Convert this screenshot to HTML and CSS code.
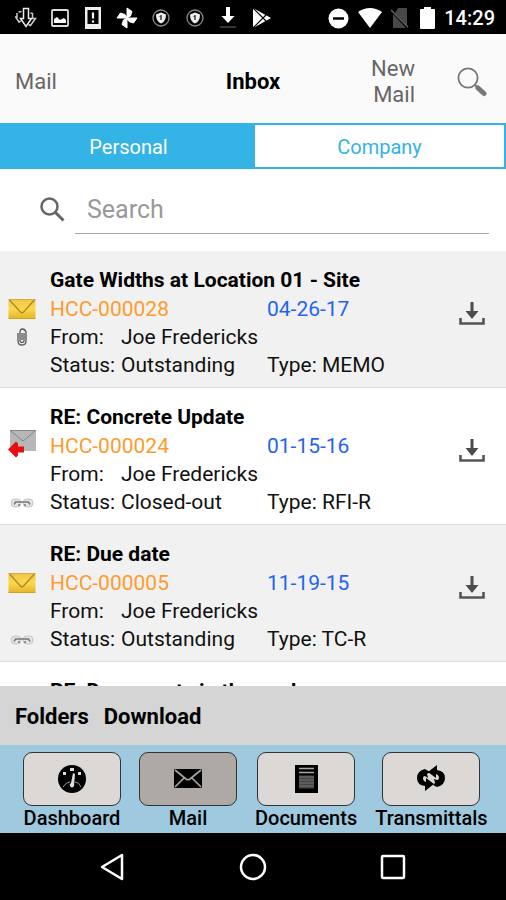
FILE: index.html
```html
<!DOCTYPE html>
<html lang="en">
<head>
<meta charset="utf-8">
<meta name="viewport" content="width=device-width, initial-scale=1">
<title>Inbox</title>
<link rel="stylesheet" href="styles.css">
</head>
<body>
<svg class="defs" width="0" height="0" aria-hidden="true">
  <defs>
    <linearGradient id="gold" x1="0" y1="0" x2="0" y2="1">
      <stop offset="0" stop-color="#efc648"/><stop offset=".5" stop-color="#fbd84a"/><stop offset="1" stop-color="#e3b32a"/>
    </linearGradient>
    <symbol id="envelope" viewBox="0 0 27 20">
      <rect width="27" height="20" rx="1" fill="url(#gold)"/>
      <path d="M1 1l11 12q1.500 1.500 3 0L26 1" fill="none" stroke="#a98636" stroke-width="1.300"/>
      <path d="M0 .5h27" stroke="#d2ac47"/>
      <path d="M0 19.500h27" stroke="#d3a21f"/>
    </symbol>
    <symbol id="replied" viewBox="0 0 28 32">
      <rect x="2" width="26" height="21" fill="#b7b7b7"/>
      <path d="M2 .5h26M3 1l10.500 9q1.500 1.500 3 0L27 1" fill="none" stroke="#858585"/>
      <path d="M0 19.500l8-8 2 2v3h6v6h-6v3l-2 2z" fill="#e90d0d"/>
    </symbol>
    <symbol id="clip" viewBox="0 0 10 18">
      <path d="M7 5v8q0 1.500-2 1.500T3 13V4q0-3 2.500-3T9 4v9q0 4-4 4t-4-4V5M5 5v7" fill="none" stroke="#555" stroke-width="1.300"/>
    </symbol>
    <symbol id="link" viewBox="0 0 24 12">
      <rect x="1" y="2" width="10" height="8" rx="4" fill="#e5e5e5" stroke="#c4c4c4"/>
      <rect x="13" y="2" width="10" height="8" rx="4" fill="#e5e5e5" stroke="#c4c4c4"/>
      <path d="M4 7.500L5.500 5h13L20 7.500M8 8h2M14 8h2" fill="none" stroke="#777" stroke-width="1.500"/>
    </symbol>
    <symbol id="download" viewBox="0 0 26 24">
      <path d="M1.500 16v5.500h23V16" fill="none" stroke="#555" stroke-width="2.600"/>
      <path d="M11.500 0h3v9H19.500l-6.500 8-6.500-8h5z" fill="#4c4c4c"/>
    </symbol>
    <symbol id="shield" viewBox="0 0 22 22">
      <circle cx="11" cy="11" r="8" fill="none" stroke="#8b8b8b" stroke-width="1.300"/>
      <path d="M11 5.500l5 2q0 7-5 9-5-2-5-9z" fill="#eee"/>
      <path d="M11 8v5M9.500 9.500L11 8.500" stroke="#333" stroke-width="1.400"/>
    </symbol>
  </defs>
</svg>

<div class="status">
  <div class="notices">
    <svg viewBox="0 0 22 22" width="22" height="22"><path d="M8.500 1.500h5v10h3L11 19.500 5.500 11.500h3z" fill="#000" stroke="#eee" stroke-width="1.500"/><path d="M3.500 5l3-.5M2 6v4H.5l3.500 5 2-1M15.500 6l2 .5v5h3l-5 7-2-1" fill="none" stroke="#ccc" stroke-width="1.500"/></svg>
    <svg viewBox="0 0 22 22" width="22" height="22"><rect x="3" y="3" width="16" height="16" rx="1" fill="none" stroke="#ddd" stroke-width="1.800"/><path d="M5 16v-4l3-2 3 3 4-2 2 2v3z" fill="#fff"/></svg>
    <svg viewBox="0 0 22 22" width="22" height="22"><path d="M3 0h16v22H3zM5.500 3v14h11V3z" fill="#eee" fill-rule="evenodd"/><path d="M11 5.500v6M11 13.500v2" stroke="#fff" stroke-width="2.200"/></svg>
    <svg viewBox="0 0 22 22" width="22" height="22"><path d="M11 11V1l5 3.500L14.500 9zM11 11h10l-3.500 5-4.500-1.500zM11 11v10l-5-3.500L7.500 13zM11 11H1l3.500-5L9 7.500z" fill="#fff" stroke="#fff"/></svg>
    <svg width="22" height="22"><use href="#shield"/></svg>
    <svg width="22" height="22"><use href="#shield"/></svg>
    <svg viewBox="0 0 22 22" width="22" height="22"><path d="M9 0h4v9h4.500L11 16 4.500 9H9z" fill="#fff"/><path d="M3 20h16" stroke="#333" stroke-width="2"/></svg>
    <svg viewBox="0 0 22 22" width="22" height="22"><path d="M2 1l18 10L2 21z" fill="#fff"/><path d="M2 1l13 13M2 21L15 8" stroke="#000" stroke-width="1.200"/></svg>
  </div>
  <div class="system">
    <svg viewBox="0 0 21 21" width="21" height="21"><circle cx="10.500" cy="10.500" r="10" fill="#fff"/><path d="M5 10.500h11" stroke="#000" stroke-width="2.500"/></svg>
    <svg viewBox="0 0 24 20" width="24" height="20"><path d="M0 4Q12-4 24 4L12 20z" fill="#fff"/></svg>
    <svg viewBox="0 0 20 20" width="20" height="20"><path d="M7 0h9v17L4 5zM2 6l13 14H2z" fill="#484848"/><path d="M0 2l17 17" stroke="#666" stroke-width="1.500"/></svg>
    <svg viewBox="0 0 15 22" width="15" height="22"><path d="M4 0h7v2h3q1 0 1 1v18q0 1-1 1H1q-1 0-1-1V3q0-1 1-1h3z" fill="#fff"/></svg>
    <time>14:29</time>
  </div>
</div>

<header class="header">
  <a class="back" href="#">Mail</a>
  <h1>Inbox</h1>
  <div class="actions">
    <a class="new-mail" href="#">New<br>Mail</a>
    <button class="icon-button" aria-label="Search mail">
      <svg viewBox="0 0 30 30" width="30" height="30"><circle cx="11" cy="11" r="9.600" fill="none" stroke="#777" stroke-width="1.800"/><path d="M18 18l3 3" stroke="#777" stroke-width="2"/><path d="M21 21l6 5.500" stroke="#777" stroke-width="5" stroke-linecap="round"/></svg>
    </button>
  </div>
</header>

<div class="segments">
  <button class="segment selected">Personal</button>
  <button class="segment">Company</button>
</div>

<label class="search">
  <svg viewBox="0 0 25 25" width="25" height="25" aria-hidden="true"><circle cx="9.500" cy="9.500" r="8" fill="none" stroke="#666" stroke-width="2.500"/><path d="M15 15l8.500 8.500" stroke="#666" stroke-width="3"/></svg>
  <input type="search" placeholder="Search">
</label>

<main class="list">
  <article class="item">
    <h2>Gate Widths at Location 01 - Site</h2>
    <svg class="kind" width="28" height="20"><use href="#envelope"/></svg>
    <span class="code">HCC-000028</span><span class="date">04-26-17</span>
    <svg class="clip" width="10" height="18"><use href="#clip"/></svg>
    <span class="from">From:</span><span class="sender">Joe Fredericks</span>
    <span class="state">Status:</span><span class="state-value">Outstanding</span><span class="type">Type: MEMO</span>
    <button class="download" aria-label="Download"><svg width="26" height="24"><use href="#download"/></svg></button>
  </article>
  <article class="item">
    <h2>RE: Concrete Update</h2>
    <svg class="kind" width="28" height="32"><use href="#replied"/></svg>
    <span class="code">HCC-000024</span><span class="date">01-15-16</span>
    <span class="from">From:</span><span class="sender">Joe Fredericks</span>
    <svg class="link" width="24" height="12"><use href="#link"/></svg>
    <span class="state">Status:</span><span class="state-value">Closed-out</span><span class="type">Type: RFI-R</span>
    <button class="download" aria-label="Download"><svg width="26" height="24"><use href="#download"/></svg></button>
  </article>
  <article class="item">
    <h2>RE: Due date</h2>
    <svg class="kind" width="28" height="20"><use href="#envelope"/></svg>
    <span class="code">HCC-000005</span><span class="date">11-19-15</span>
    <span class="from">From:</span><span class="sender">Joe Fredericks</span>
    <svg class="link" width="24" height="12"><use href="#link"/></svg>
    <span class="state">Status:</span><span class="state-value">Outstanding</span><span class="type">Type: TC-R</span>
    <button class="download" aria-label="Download"><svg width="26" height="24"><use href="#download"/></svg></button>
  </article>
  <article class="item">
    <h2>RE: Documents in the package</h2>
  </article>
</main>

<div class="toolbar">
  <button>Folders</button>
  <button>Download</button>
</div>

<nav class="tabs">
  <a class="tab" href="#">
    <span class="tile"><svg viewBox="0 0 28 28" width="28" height="28"><circle cx="14" cy="14" r="14"/><path d="M5 22q3-5 7-5M17 17q4 0 6 5" fill="none" stroke="#999"/><path d="M12 3h4v3h-4zM5 7h3v3H5zM20 7h3v3h-3z" fill="#ddd"/><path d="M15 8l2 1-1 12q-2 3-4 0-1-2 1-3z" fill="#ddd"/></svg></span>
    Dashboard
  </a>
  <a class="tab" href="#" aria-current="page">
    <span class="tile"><svg viewBox="0 0 28 28" width="28" height="28"><rect y="4" width="28" height="19" rx="1"/><path d="M1 5l11 9q2 1.500 4 0L27 5M1 22l9-9M27 22l-9-9" fill="none" stroke="#aaa39f" stroke-width="1.700"/></svg></span>
    Mail
  </a>
  <a class="tab" href="#">
    <span class="tile"><svg viewBox="0 0 28 28" width="28" height="28"><rect x="3" width="23" height="28"/><path d="M7 3.500h15M7 7.500h15" stroke="#aaa" stroke-width="1.300"/><path d="M7 10.500h15v13H7z" fill="#444"/><path d="M7 12h15M7 15h15M7 18h15M7 21h15" stroke="#777"/></svg></span>
    Documents
  </a>
  <a class="tab" href="#">
    <span class="tile"><svg viewBox="0 0 28 28" width="28" height="28"><path d="M8 4Q0 6 0 13q0 7 8 8v5l9-7-8-6v4q-3-1-3-4 0-2 2-2l3 2-1-4 3-2z"/><path d="M20 22q8-2 8-9 0-7-8-8V0l-9 7 8 6V9q3 1 3 4 0 2-2 2l-3-1 1 4-2 2z"/></svg></span>
    Transmittals
  </a>
  <a class="tab" href="#" aria-label="More"><span class="tile"></span></a>
</nav>

<div class="system-nav">
  <button aria-label="Back"><svg viewBox="0 0 28 28" width="28" height="28"><path d="M3 14l20-12v24z" fill="none" stroke="#fff" stroke-width="2.500" stroke-linejoin="round"/></svg></button>
  <button aria-label="Home"><svg viewBox="0 0 28 28" width="28" height="28"><circle cx="14" cy="14" r="12" fill="none" stroke="#fff" stroke-width="2.500"/></svg></button>
  <button aria-label="Recent apps"><svg viewBox="0 0 28 28" width="28" height="28"><rect x="3" y="3" width="22" height="22" rx="1" fill="none" stroke="#fff" stroke-width="2.500"/></svg></button>
</div>
</body>
</html>
```

FILE: styles.css
```css
* { box-sizing: border-box; }

body {
  margin: 0;
  height: 100vh;
  display: flex;
  flex-direction: column;
  overflow: hidden;
  background: #fff;
  color: #111;
  font: 400 21px/28px Roboto, "Liberation Sans", sans-serif;
}

.defs { position: absolute; }
svg { display: block; flex: none; }
h1, h2 { margin: 0; font-weight: 700; }
a { color: inherit; text-decoration: none; }
button {
  padding: 0;
  border: 0;
  background: none;
  color: inherit;
  font: inherit;
}

.status {
  display: flex;
  justify-content: space-between;
  align-items: center;
  padding: 5px 11px 3px 15px;
  background: #000;
  color: #fff;
  font-size: 20px;
  font-weight: 500;
  line-height: 26px;
}
.notices { display: flex; justify-content: space-between; flex: 0 1 258px; }
.system { display: flex; align-items: center; gap: 9px; }

.header {
  display: grid;
  grid-template-columns: 1fr auto 1fr;
  align-items: center;
  padding: 22px 15px 15px;
  background: #fafafa;
  color: #666;
  font-size: 22px;
  line-height: 26px;
}
.header h1 { color: #000; font-size: 22px; }
.actions { display: flex; justify-content: flex-end; align-items: center; gap: 38px; text-align: right; }
.icon-button { padding: 0 4px; }

.segments {
  display: grid;
  grid-template-columns: 1fr 1fr;
  border: 2px solid #33b3e6;
  background: #fff;
}
.segment { padding: 8px 0 6px; border-left: 2px solid #33b3e6; color: #33b3e6; font-size: 20px; }
.segment.selected { background: #33b3e6; color: #fff; }

.search { display: flex; align-items: center; gap: 10px; padding: 15px 17px 17px 40px; }
.search input {
  flex: 1;
  min-width: 0;
  height: 50px;
  padding: 2px 12px 0;
  border: 0;
  border-bottom: 1px solid #aaa;
  background: none;
  color: #333;
  font: inherit;
  font-size: 25px;
}
.search input::placeholder { color: #999; }

.list { flex: 1; min-height: 0; overflow: hidden; }
.item {
  display: grid;
  grid-template-columns: 34px 71px 146px 1fr 26px;
  grid-template-rows: 29px 28px 28px 29px;
  padding: 15px 21px 7px 16px;
  border-bottom: 1px solid #ddd;
  white-space: nowrap;
}
.item:nth-child(odd) { background: #f1f1f1; }
.item h2 { grid-area: 1 / 2 / 2 / 5; color: #000; font-size: 21px; line-height: 29px; }
.kind, .clip, .link { grid-column: 1; align-self: center; justify-self: center; margin-left: -22px; }
.kind { grid-row: 2; }
.clip { grid-row: 3; }
.link { grid-row: 4; }
.code { grid-area: 2 / 2 / 3 / 4; color: #ff9b2e; }
.date { grid-area: 2 / 4; color: #2463f0; }
.from { grid-area: 3 / 2; }
.sender { grid-area: 3 / 3; }
.state { grid-area: 4 / 2; }
.state-value { grid-area: 4 / 3; }
.type { grid-area: 4 / 4; }
.state, .state-value, .type { line-height: 29px; }
.download { grid-area: 2 / 5 / 4 / 6; align-self: start; margin-top: 7px; }

.toolbar {
  display: flex;
  gap: 15px;
  padding: 17px 15px 14px;
  background: #d5d5d5;
  color: #000;
  font-size: 22px;
  font-weight: 700;
}

.tabs {
  display: flex;
  gap: 18px;
  padding: 7px 23px 2px;
  overflow: hidden;
  background: #9ec9df;
  color: #000;
  font-size: 20px;
  font-weight: 500;
  line-height: 25px;
}
.tab { display: flex; flex: none; flex-direction: column; align-items: center; min-width: 98px; }
.tile {
  display: flex;
  align-items: center;
  justify-content: center;
  width: 98px;
  height: 54px;
  border: 1px solid #333;
  border-radius: 9px;
  background: #dcd8d5;
}
.tab[aria-current] .tile { background: #afa9a5; }

.system-nav {
  display: flex;
  justify-content: center;
  gap: 112px;
  padding: 20px 0 19px;
  background: #000;
}
```
